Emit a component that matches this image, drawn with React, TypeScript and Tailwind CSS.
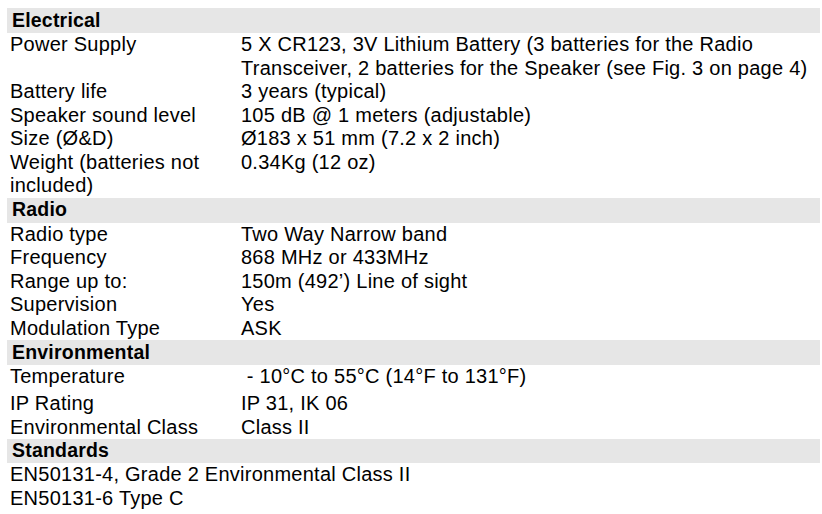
import { FC, ReactNode } from 'react';

type Row = { label: ReactNode; value?: ReactNode; className?: string };

const SectionHeader: FC<{ title: string; className?: string }> = ({ title, className = '' }) => (
    <div className={`bg-[#e6e6e6] flex items-center pl-[5px] ${className || 'h-[25px]'}`}>
        <span className="text-[19.5px] font-bold leading-none tracking-[0.2px]">{title}</span>
    </div>
);

const SpecRows: FC<{ rows: Row[] }> = ({ rows }) => (
    <div className="pl-[3px]">
        {rows.map((r, i) => (
            <div key={i} className={`grid grid-cols-[231px_1fr] ${r.className ?? ''}`}>
                <div className="pr-1">{r.label}</div>
                <div>{r.value}</div>
            </div>
        ))}
    </div>
);

const App: FC = () => {
    return (
        <div
            className="w-[822px] h-[514px] bg-white text-black text-[20px] leading-[23.5px] tracking-[0.25px] overflow-hidden"
            style={{ fontFamily: '"Liberation Sans", Arial, sans-serif' }}
        >
            <div className="pt-[8px] pl-[7px] pr-[2px]">
                {/* Electrical */}
                <SectionHeader title="Electrical" />
                <SpecRows
                    rows={[
                        {
                            label: 'Power Supply',
                            value: (
                                <>
                                    5 X CR123, 3V Lithium Battery (3 batteries for the Radio
                                    <br />
                                    Transceiver, 2 batteries for the Speaker (see Fig. 3 on page 4)
                                </>
                            ),
                        },
                        { label: 'Battery life', value: '3 years (typical)' },
                        { label: 'Speaker sound level', value: '105 dB @ 1 meters (adjustable)' },
                        { label: 'Size (Ø&D)', value: 'Ø183 x 51 mm (7.2 x 2 inch)' },
                        {
                            label: (
                                <>
                                    Weight (batteries not
                                    <br />
                                    included)
                                </>
                            ),
                            value: '0.34Kg (12 oz)',
                        },
                    ]}
                />

                {/* Radio */}
                <SectionHeader title="Radio" />
                <SpecRows
                    rows={[
                        { label: 'Radio type', value: 'Two Way Narrow band' },
                        { label: 'Frequency', value: '868 MHz or 433MHz' },
                        { label: 'Range up to:', value: '150m (492’) Line of sight' },
                        { label: 'Supervision', value: 'Yes' },
                        { label: 'Modulation Type', value: 'ASK' },
                    ]}
                />

                {/* Environmental */}
                <SectionHeader title="Environmental" className="h-[24.5px]" />
                <SpecRows
                    rows={[
                        {
                            label: 'Temperature',
                            value: <span className="whitespace-pre"> - 10°C to 55°C (14°F to 131°F)</span>,
                            className: 'pb-[4px]',
                        },
                        { label: 'IP Rating', value: 'IP 31, IK 06' },
                        { label: 'Environmental Class', value: 'Class II' },
                    ]}
                />

                {/* Standards */}
                <SectionHeader title="Standards" className="h-[24px]" />
                <div className="pl-[3px]">
                    <div>EN50131-4, Grade 2 Environmental Class II</div>
                    <div>EN50131-6 Type C</div>
                </div>
            </div>
        </div>
    );
};

export default App;
